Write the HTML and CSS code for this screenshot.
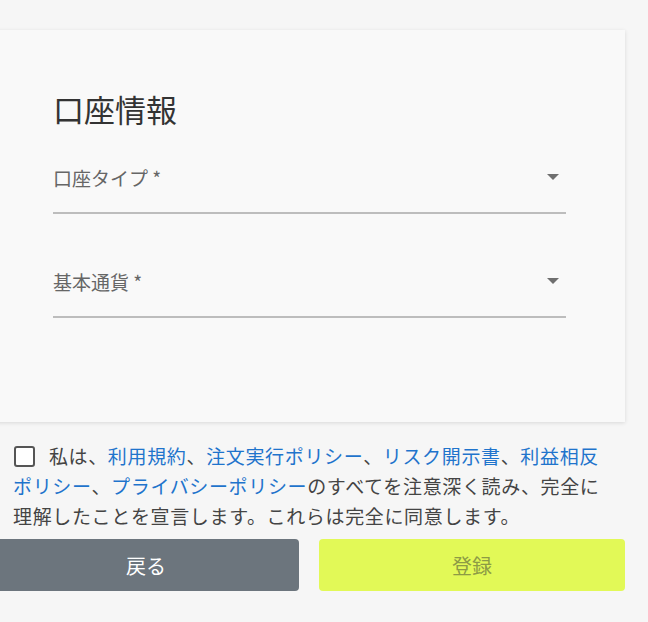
FILE: index.html
```html
<!DOCTYPE html>
<html lang="ja">
<head>
    <meta charset="UTF-8">
    <meta name="viewport" content="width=device-width, initial-scale=1.0">
    <title>口座情報</title>
    <link rel="stylesheet" href="styles.css">
</head>
<body>
<div class="wrap">
    <!-- account card -->
    <div class="card">
        <h2 class="card-title">口座情報</h2>
        <div class="field">
            <span class="field-label">口座タイプ *</span>
            <span class="arrow"></span>
        </div>
        <div class="field field-second">
            <span class="field-label">基本通貨 *</span>
            <span class="arrow"></span>
        </div>
    </div>

    <!-- agreement -->
    <div class="agree">
        <span class="check"></span>
        <span class="agree-text">私は、<a href="#">利用規約</a>、<a href="#">注文実行ポリシー</a>、<a href="#">リスク開示書</a>、<a href="#">利益相反ポリシー</a>、<a href="#">プライバシーポリシー</a>のすべてを注意深く読み、完全に理解したことを宣言します。これらは完全に同意します。</span>
    </div>

    <div class="buttons">
        <button class="btn btn-back">戻る</button>
        <button class="btn btn-submit">登録</button>
    </div>
</div>
</body>
</html>
```

FILE: styles.css
```css
/* page */
body {
    margin: 0;
    background-color: #f6f6f6;
    font-family: "Noto Sans CJK JP", "Noto Sans", sans-serif;
    color: #333;
}
.wrap {
    margin: 0 23px 0 -7px;
    padding-top: 30px;
}
/* card */
.card {
    background-color: #f9f9f9;
    padding: 60px 59px 104px 60px;
    box-shadow: 0 1px 4px rgba(0, 0, 0, 0.12);
}
.card-title {
    margin: 0 0 14px;
    font-size: 31px;
    font-weight: normal;
    line-height: 38px;
    color: #333;
}
.field {
    height: 70px;
    display: flex;
    align-items: center;
    justify-content: space-between;
    border-bottom: 2px solid #bdbdbd;
}
.field-second {
    margin-top: 32px;
}
.field-label {
    font-size: 19px;
    color: #666;
}
.arrow {
    width: 0;
    height: 0;
    margin-right: 7px;
    border-left: 6px solid transparent;
    border-right: 6px solid transparent;
    border-top: 6px solid #6f6f6f;
}
/* agreement */
.agree {
    margin-top: 19px;
    padding: 0 20px;
    font-size: 19px;
    line-height: 30px;
    letter-spacing: 0.65px;
    color: #444;
}
.check {
    display: inline-block;
    width: 17px;
    height: 17px;
    border: 2px solid #555;
    border-radius: 3px;
    vertical-align: -3px;
    margin: 0 9px 0 1px;
    background: #fff;
}
.agree a {
    color: #1f74cc;
    text-decoration: none;
}
/* buttons */
.buttons {
    margin-top: 8px;
    display: flex;
    gap: 20px;
}
.btn {
    flex: 1;
    height: 52px;
    border: none;
    border-radius: 4px;
    font-family: "Noto Sans CJK JP", "Noto Sans", sans-serif;
    font-size: 20px;
}
.btn-back {
    background-color: #6c757d;
    color: #fff;
}
.btn-submit {
    background-color: #e2f957;
    color: #8d9b45;
}
```
